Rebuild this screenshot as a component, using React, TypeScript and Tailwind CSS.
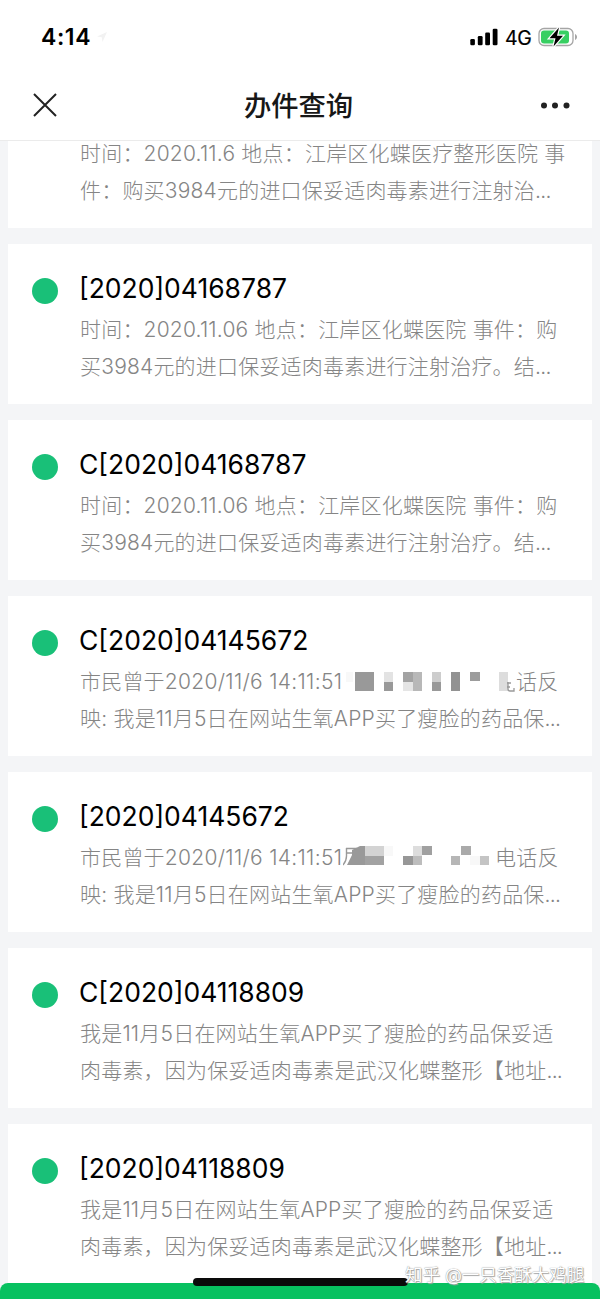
import type { ReactNode } from "react";

type Block = [x: number, y: number, w: number, h: number, fill: string];

function Mosaic({ blocks, className }: { blocks: Block[]; className: string }) {
  return (
    <svg className={className} viewBox="0 0 180 20" shapeRendering="crispEdges" aria-hidden="true">
      {blocks.map(([x, y, w, h, fill], i) => (
        <rect key={i} x={x} y={y} width={w} height={h} fill={fill} />
      ))}
    </svg>
  );
}

const mosaicA: Block[] = [
  [0, 0, 7, 10, "#f8f8f8"],
  [9, 0, 19, 19, "#999999"],
  [38, 0, 9, 10, "#e3e3e3"],
  [38, 10, 9, 9, "#999999"],
  [57, 0, 10, 10, "#a3a3a3"],
  [57, 10, 10, 9, "#e5e5e5"],
  [67, 0, 9, 19, "#b8b8b8"],
  [86, 0, 9, 10, "#cdcdcd"],
  [86, 10, 9, 9, "#999999"],
  [105, 0, 9, 19, "#929292"],
  [124, 0, 10, 9, "#9c9c9c"],
  [153, 0, 9, 19, "#dddddd"],
];

const mosaicB: Block[] = [
  [19, 0, 19, 10, "#d3d3d3"],
  [12, 10, 26, 9, "#a2a2a2"],
  [38, 0, 9, 10, "#f8f8f8"],
  [57, 10, 10, 9, "#979797"],
  [67, 0, 9, 10, "#dddddd"],
  [67, 10, 9, 9, "#bdbdbd"],
  [76, 0, 10, 9, "#a0a0a0"],
  [105, 10, 9, 9, "#b6b6b6"],
  [115, 0, 10, 9, "#aaaaaa"],
  [124, 10, 10, 9, "#f8f8f8"],
  [134, 10, 9, 9, "#c4c4c4"],
];

function Line({ children, more = false }: { children: ReactNode; more?: boolean }) {
  return (
    <p className="relative h-[37px] whitespace-pre">
      {children}
      {more && <span className="tracking-[-0.7px]">...</span>}
    </p>
  );
}

function Card({ title, children }: { title: string; children: ReactNode }) {
  return (
    <article className="mx-2 flex h-40 shrink-0 bg-white pt-[26px] pl-6">
      <span className="mt-2 mr-[22px] size-[26px] shrink-0 rounded-full bg-[#19c078]" />
      <div>
        <h2 className="mb-1 -ml-px h-[37px] text-[26.5px] leading-[37px] whitespace-pre text-black">{title}</h2>
        <div className="text-[21px] leading-[37px] font-light tracking-[0.2px] text-[#858585]">{children}</div>
      </div>
    </article>
  );
}

function StatusBar() {
  return (
    <div className="flex h-[70px] items-start justify-between pt-[22px] pr-[22px] pl-[41px]">
      <div className="flex h-[30px] items-center">
        <span className="text-[23px] leading-[30px] font-semibold tracking-[0.6px]">4:14</span>
        <svg className="ml-[6px] size-[10px]" viewBox="0 0 10 10">
          <path d="M10 0 0 4.5l4.8.7L5.5 10z" fill="#f2f2f2" />
        </svg>
      </div>
      <div className="flex h-[30px] items-center">
        <svg className="h-[18px] w-7" viewBox="0 0 28 18">
          <rect x="0.3" y="11" width="4.600" height="6.200" rx="1.3" />
          <rect x="7.8" y="8" width="4.800" height="9.200" rx="1.3" />
          <rect x="15.200" y="4.500" width="4.800" height="12.700" rx="1.3" />
          <rect x="22.700" y="0.8" width="4.800" height="16.400" rx="1.3" />
        </svg>
        <span className="ml-[7px] w-[33px] pt-0.5 text-[19.5px] leading-[28px] font-normal tracking-[-0.4px] [-webkit-text-stroke:0.2px_black]">4G</span>
        <svg className="h-5 w-10" viewBox="0 0 40 20">
          <rect x="1" y="1.5" width="34" height="17" rx="5" fill="#fff" stroke="#a5a5a5" strokeWidth="1.3" />
          <rect x="3" y="3.5" width="28" height="13" rx="3" fill="#37cf62" />
          <path d="M37 7v6c1.200-.4 2-1.700 2-3s-.8-2.600-2-3z" fill="#a5a5a5" />
          <path d="M21 0.500 11.500 11.300h6L15.500 19.500 25 8.700H19z" fill="#000" stroke="#fff" strokeWidth="2.400" paintOrder="stroke" />
        </svg>
      </div>
    </div>
  );
}

export default function App() {
  return (
    <div className="relative flex h-[1299px] w-[600px] flex-col overflow-hidden bg-[#f4f5f7] font-['Inter','Noto_Sans_CJK_SC',sans-serif] text-black">
      <header className="h-[141px] shrink-0 border-b border-[#ebebeb] bg-white">
        <StatusBar />
        <div className="flex h-[70px] items-center justify-between pr-[30px] pl-[33px]">
          <svg className="size-6" viewBox="0 0 24 24" fill="none" stroke="#222" strokeWidth="2">
            <path d="M1 1 23 23M23 1 1 23" />
          </svg>
          <h1 className="pt-1 text-[27.3px] leading-10 font-medium text-[#171717]">办件查询</h1>
          <svg className="h-6 w-[30px]" viewBox="0 0 30 24" fill="#222">
            <circle cx="4" cy="12.500" r="3" />
            <circle cx="15" cy="12.500" r="3" />
            <circle cx="26.500" cy="12.500" r="3" />
          </svg>
        </div>
      </header>

      <main className="flex min-h-0 flex-1 flex-col gap-4 overflow-hidden">
        <article className="mx-2 flex h-[87px] shrink-0 flex-col justify-end overflow-hidden bg-white pb-[19px] pl-[72px] text-[21px] leading-[37px] font-light tracking-[0.2px] text-[#858585]">
          <Line>时间：2020.11.6 地点：江岸区化蝶医疗整形医院 事</Line>
          <Line more>件：购买3984元的进口保妥适肉毒素进行注射治</Line>
        </article>
        <Card title="[2020]04168787">
          <Line>时间：2020.11.06 地点：江岸区化蝶医院 事件：购</Line>
          <Line more>买3984元的进口保妥适肉毒素进行注射治疗。结</Line>
        </Card>
        <Card title="C[2020]04168787">
          <Line>时间：2020.11.06 地点：江岸区化蝶医院 事件：购</Line>
          <Line more>买3984元的进口保妥适肉毒素进行注射治疗。结</Line>
        </Card>
        <Card title="C[2020]04145672">
          <Line>
            <span className="inline-block w-[436px]">市民曾于<span className="tracking-[0.3px]">2020/11/6 14:11:51</span></span>话反
            <Mosaic blocks={mosaicA} className="absolute top-[9px] left-[266px] h-5 w-[180px]" />
            <svg className="absolute top-[18px] left-[427px] h-3 w-2" viewBox="0 0 8 12" fill="none" stroke="#999" strokeWidth="1.300">
              <path d="M0 2h4M0 6h3M1 1v7c0 1 1 2 2 2h4V7" />
            </svg>
          </Line>
          <Line more>映: 我是11月5日在网站生氧APP买了瘦脸的药品保</Line>
        </Card>
        <Card title="[2020]04145672">
          <Line>
            <span className="inline-block w-[415px]">市民曾于<span className="tracking-[0.3px]">2020/11/6 14:11:51</span></span>电话反
            <Mosaic blocks={mosaicB} className="absolute top-[7px] left-[266px] h-5 w-[180px]" />
            <svg className="absolute top-[7px] left-[263px] h-5 w-[22px]" viewBox="0 0 22 20">
              <path d="M4 19 9 9 9 4 17 0h5v19z" fill="#999" />
              <path d="M3 2.500h11M3.500 2v8c0 4-1 6-3.500 9M4 7h8" fill="none" stroke="#999" strokeWidth="1.400" />
            </svg>
          </Line>
          <Line more>映: 我是11月5日在网站生氧APP买了瘦脸的药品保</Line>
        </Card>
        <Card title="C[2020]04118809">
          <Line>我是11月5日在网站生氧APP买了瘦脸的药品保妥适</Line>
          <Line more>肉毒素，因为保妥适肉毒素是武汉化蝶整形【地址</Line>
        </Card>
        <Card title="[2020]04118809">
          <Line>我是11月5日在网站生氧APP买了瘦脸的药品保妥适</Line>
          <Line more>肉毒素，因为保妥适肉毒素是武汉化蝶整形【地址</Line>
        </Card>
      </main>

      <div className="absolute inset-x-0 bottom-0 h-4 rounded-t-[8px] bg-[#07c160]" />
      <div className="absolute bottom-[13px] left-[193px] h-2 w-[215px] rounded-full bg-[#0a0a0a]" />
      <p className="absolute top-[1263px] left-[405px] text-[17.5px] leading-6 whitespace-pre text-white [text-shadow:0_0_1px_#777,1px_1px_1px_#aaa]">
        知乎 @一只香酥大鸡腿
      </p>
    </div>
  );
}
